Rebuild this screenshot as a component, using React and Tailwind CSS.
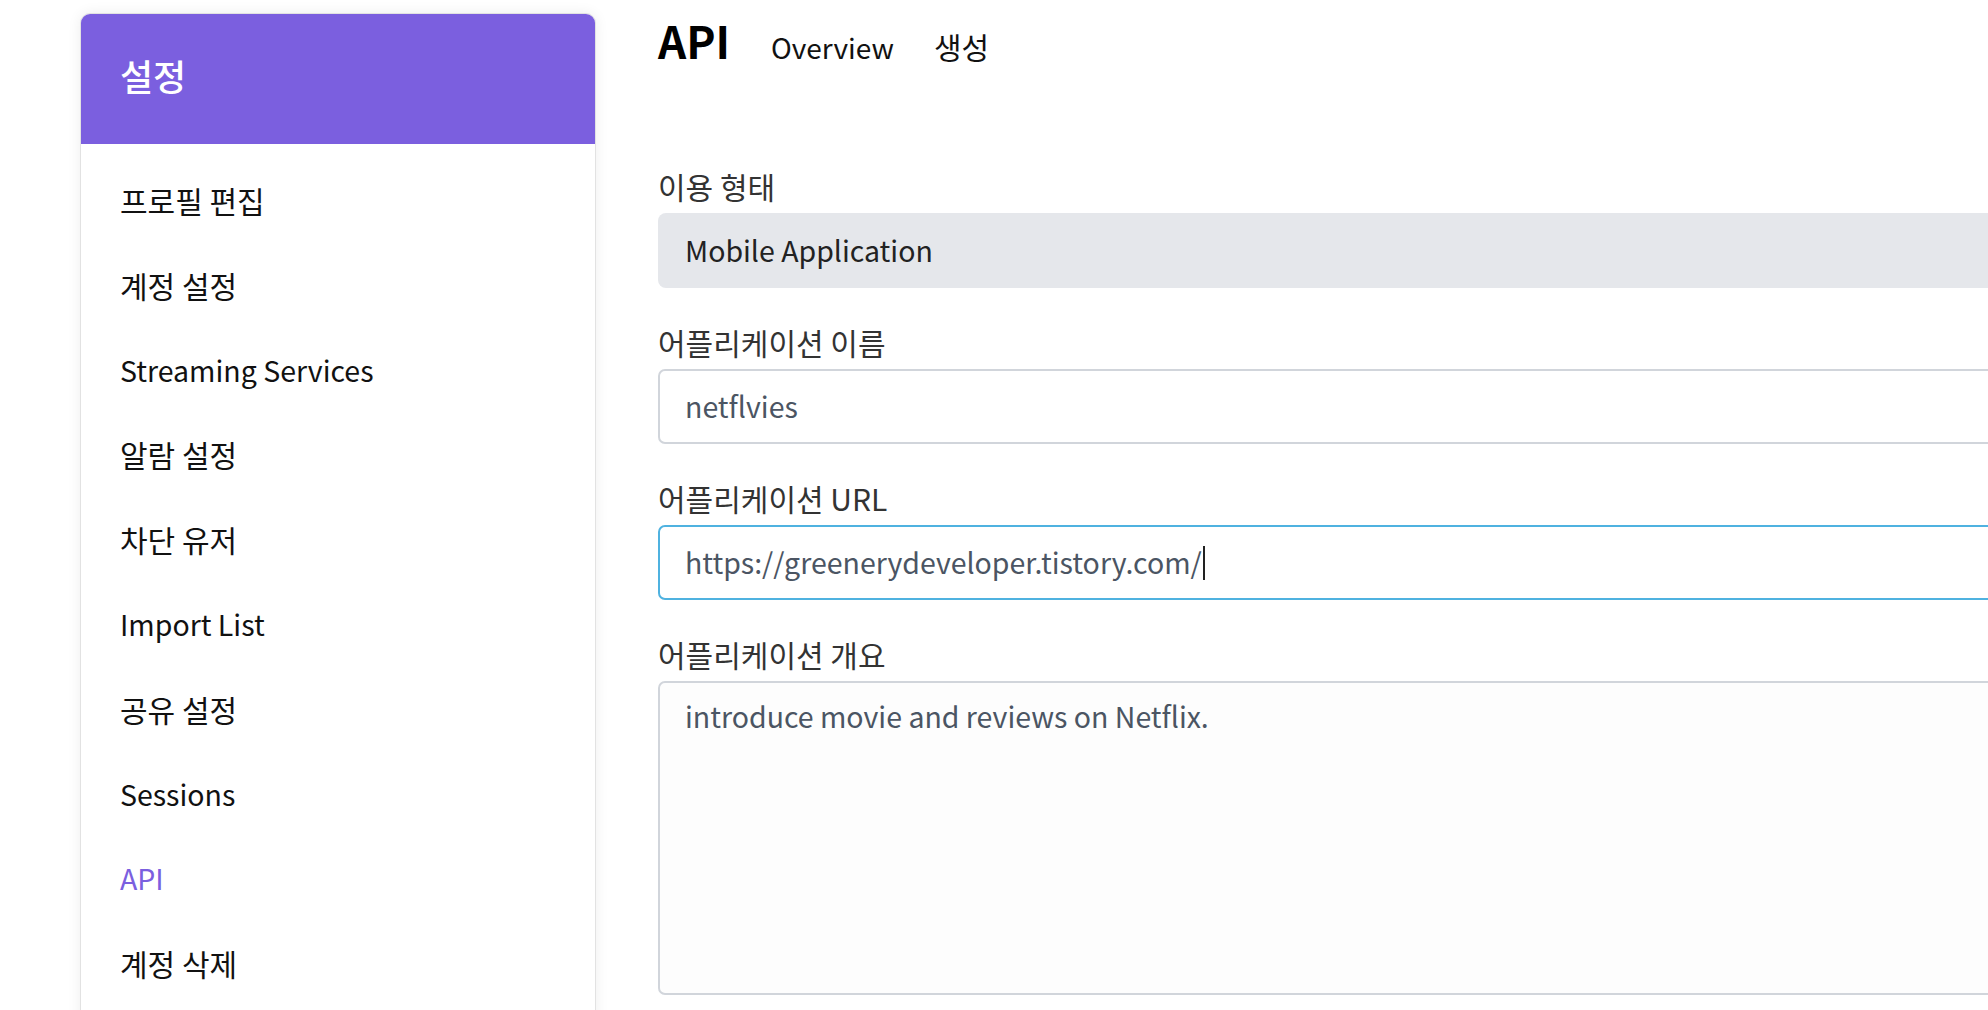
import React from 'react';

const menu = [
  { label: '프로필 편집' },
  { label: '계정 설정' },
  { label: 'Streaming Services', latin: true },
  { label: '알람 설정' },
  { label: '차단 유저' },
  { label: 'Import List', latin: true },
  { label: '공유 설정' },
  { label: 'Sessions', latin: true },
  { label: 'API', latin: true, active: true },
  { label: '계정 삭제' },
];

const Field = ({ label, children }) => (
  <div className="mb-[34px]">
    <div className="h-[40px] leading-[40px] text-[30px] text-[#333333] mb-[7px]">{label}</div>
    {children}
  </div>
);

const App = () => {
  return (
    <div
      className="flex h-[1010px] w-full overflow-hidden bg-white"
      style={{ fontFamily: '"Noto Sans CJK KR", "Noto Sans", sans-serif' }}
    >
      {/* Settings side menu */}
      <aside className="ml-[80px] mt-[13px] w-[516px] shrink-0 self-start rounded-t-[10px] border border-[#e2e2e2] bg-white shadow-[0_0_14px_rgba(0,0,0,0.07)]">
        <div className="flex h-[130px] items-center rounded-t-[9px] bg-[#7b5fdf] pb-[8px] pl-[39px] text-[36px] font-medium text-white">
          설정
        </div>
        <nav className="pt-[14px] pb-[40px]">
          {menu.map((item) => (
            <div
              key={item.label}
              className={`flex h-[84.8px] items-center pl-[39px] ${item.latin ? 'text-[28.5px]' : 'text-[30px]'} ${
                item.active ? 'text-[#7b5fdf]' : 'text-[#111111]'
              }`}
            >
              {item.label}
            </div>
          ))}
        </nav>
      </aside>

      {/* API form */}
      <main className="ml-[62px] w-[1500px] shrink-0 pt-[10px]">
        <div className="flex h-[60px] items-baseline gap-[40px]">
          <h1 className="mr-[1px] text-[44px] font-bold leading-[60px] text-black">API</h1>
          <span className="text-[28px] text-[#111111]">Overview</span>
          <span className="text-[30px] text-[#111111]">생성</span>
        </div>

        <div className="mt-[96px]">
          <Field label="이용 형태">
            <div className="flex h-[75px] items-center rounded-l-[8px] bg-[#e5e7eb] pl-[27px] text-[28.5px] text-[#222222]">
              Mobile Application
            </div>
          </Field>

          <Field label="어플리케이션 이름">
            <div className="flex h-[75px] items-center rounded-l-[7px] border-2 border-[#d1d5db] pl-[25px] text-[28.5px] text-[#4b5563]">
              netflvies
            </div>
          </Field>

          <Field label="어플리케이션 URL">
            <div className="flex h-[75px] items-center rounded-l-[7px] border-2 border-[#4fb2e0] pl-[25px] text-[28.5px] text-[#4b5563]">
              https://greenerydeveloper.tistory.com/
              <span className="ml-[1px] inline-block h-[34px] w-[2px] bg-[#222222]" />
            </div>
          </Field>

          <Field label="어플리케이션 개요">
            <div className="h-[314px] rounded-l-[7px] border-2 border-[#d1d5db] bg-[#fdfdfd] pl-[25px] pt-[13px] text-[28.5px] leading-[40px] text-[#4b5563]">
              introduce movie and reviews on Netflix.
            </div>
          </Field>
        </div>
      </main>
    </div>
  );
};

export default App;
